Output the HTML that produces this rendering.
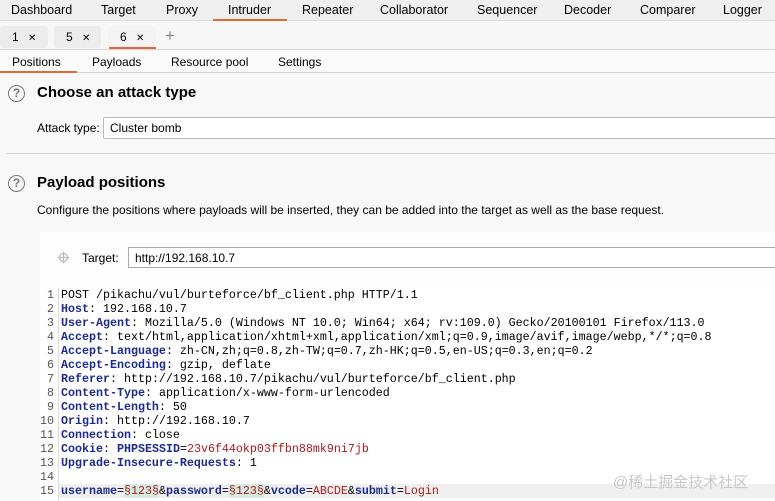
<!DOCTYPE html>
<html><head><meta charset="utf-8"><style>
*{margin:0;padding:0;box-sizing:border-box}
body{width:775px;height:501px;overflow:hidden;background:#f8f8f8;font-family:"Liberation Sans",sans-serif;font-size:12px;color:#000;position:relative}
.a{position:absolute;white-space:nowrap}
.nav{position:absolute;left:0;top:0;width:775px;height:21px;background:#efefef;border-bottom:1px solid #ddd}
.nav span{position:absolute;top:3px;font-size:12.5px}
.tabs{position:absolute;left:0;top:22px;width:775px;height:28px;background:#f7f7f7;border-bottom:1px solid #d4d4d4}
.t{position:absolute;top:4px;height:22px;background:#ececec;border-radius:3px;font-size:12px;padding:4px 0 0 12px}
.sub{position:absolute;left:0;top:51px;width:775px;height:22px;background:#fbfbfb;border-bottom:1px solid #d4d4d4}
.sub span{position:absolute;top:4px;font-size:12px}
.q{position:absolute;width:17px;height:17px;border:1.5px solid #777;border-radius:50%;color:#777;font-size:12px;text-align:center;line-height:14px;font-weight:bold}
.h{font-weight:bold;font-size:15px}
.code{position:absolute;left:40px;top:288px;width:735px;height:213px;background:#fff;font-family:"Liberation Mono",monospace;font-size:11.67px}
.ln{position:absolute;left:0;width:14px;text-align:right;color:#555}
.cl{position:absolute;left:21px;white-space:pre;color:#000}
.k{color:#1c2a8c;font-weight:bold}.r{color:#a51b1b}.m{background:#d6ece2;color:#a51b1b}
</style></head><body>
<div class="nav">
<span style="left:11px">Dashboard</span><span style="left:101px">Target</span><span style="left:166px">Proxy</span>
<span style="left:228px">Intruder</span><span style="left:302px">Repeater</span><span style="left:380px">Collaborator</span>
<span style="left:477px">Sequencer</span><span style="left:564px">Decoder</span><span style="left:640px">Comparer</span><span style="left:723px">Logger</span>
<div style="position:absolute;left:213px;top:19px;width:74px;height:2px;background:#e06b38"></div>
</div>
<div class="tabs">
<div class="t" style="left:0;width:48px">1 <span style="font-size:10px;margin-left:6px">✕</span></div>
<div class="t" style="left:54px;width:47px">5 <span style="font-size:10px;margin-left:6px">✕</span></div>
<div class="t" style="left:108px;width:48px;background:#f3f3f3">6 <span style="font-size:10px;margin-left:6px">✕</span></div>
<div style="position:absolute;left:109px;top:25px;width:47px;height:2px;background:#e06b38"></div>
<span class="a" style="left:165px;top:4px;font-size:17px;color:#888">+</span>
</div>
<div class="sub">
<span style="left:12px">Positions</span><span style="left:92px">Payloads</span><span style="left:171px">Resource pool</span><span style="left:278px">Settings</span>
<div style="position:absolute;left:0;top:20px;width:77px;height:2px;background:#e06b38"></div>
</div>
<div class="q" style="left:8px;top:85px">?</div>
<div class="a h" style="left:37px;top:84px">Choose an attack type</div>
<div class="a" style="left:37px;top:121px">Attack type:</div>
<div style="position:absolute;left:103px;top:117px;width:680px;height:22px;background:#fff;border:1px solid #bbb;border-radius:2px;padding:3px 6px">Cluster bomb</div>
<div style="position:absolute;left:7px;top:153px;width:768px;height:1px;background:#d4d4d4"></div>
<div class="q" style="left:8px;top:175px">?</div>
<div class="a h" style="left:37px;top:174px">Payload positions</div>
<div class="a" style="left:37px;top:203px">Configure the positions where payloads will be inserted, they can be added into the target as well as the base request.</div>
<div style="position:absolute;left:40px;top:232px;width:735px;height:56px;background:#fdfdfd"></div>
<svg class="a" style="left:57px;top:251px" width="13" height="13" viewBox="0 0 13 13"><circle cx="6.5" cy="6.5" r="4" fill="none" stroke="#bbb" stroke-width="1.2"/><path d="M6.5 0.5v12M0.5 6.5h12" stroke="#bbb" stroke-width="1.2"/></svg>
<div class="a" style="left:82px;top:251px">Target:</div>
<div style="position:absolute;left:128px;top:247px;width:660px;height:21px;background:#fff;border:1px solid #aaa;padding:3px 6px">http://192.168.10.7</div>
<div class="code">
<div style="position:absolute;left:18px;top:0;width:1px;height:213px;background:#ddd"></div>
<div style="position:absolute;left:19px;top:196px;width:716px;height:14px;background:#efefef"></div>
<div class="ln" style="top:0">1</div><div class="cl" style="top:0">POST /pikachu/vul/burteforce/bf_client.php HTTP/1.1</div>
<div class="ln" style="top:14px">2</div><div class="cl" style="top:14px"><span class="k">Host</span>: 192.168.10.7</div>
<div class="ln" style="top:28px">3</div><div class="cl" style="top:28px"><span class="k">User-Agent</span>: Mozilla/5.0 (Windows NT 10.0; Win64; x64; rv:109.0) Gecko/20100101 Firefox/113.0</div>
<div class="ln" style="top:42px">4</div><div class="cl" style="top:42px"><span class="k">Accept</span>: text/html,application/xhtml+xml,application/xml;q=0.9,image/avif,image/webp,*/*;q=0.8</div>
<div class="ln" style="top:56px">5</div><div class="cl" style="top:56px"><span class="k">Accept-Language</span>: zh-CN,zh;q=0.8,zh-TW;q=0.7,zh-HK;q=0.5,en-US;q=0.3,en;q=0.2</div>
<div class="ln" style="top:70px">6</div><div class="cl" style="top:70px"><span class="k">Accept-Encoding</span>: gzip, deflate</div>
<div class="ln" style="top:84px">7</div><div class="cl" style="top:84px"><span class="k">Referer</span>: http://192.168.10.7/pikachu/vul/burteforce/bf_client.php</div>
<div class="ln" style="top:98px">8</div><div class="cl" style="top:98px"><span class="k">Content-Type</span>: application/x-www-form-urlencoded</div>
<div class="ln" style="top:112px">9</div><div class="cl" style="top:112px"><span class="k">Content-Length</span>: 50</div>
<div class="ln" style="top:126px">10</div><div class="cl" style="top:126px"><span class="k">Origin</span>: http://192.168.10.7</div>
<div class="ln" style="top:140px">11</div><div class="cl" style="top:140px"><span class="k">Connection</span>: close</div>
<div class="ln" style="top:154px">12</div><div class="cl" style="top:154px"><span class="k">Cookie</span>: <span class="k">PHPSESSID</span>=<span class="r">23v6f44okp03ffbn88mk9ni7jb</span></div>
<div class="ln" style="top:168px">13</div><div class="cl" style="top:168px"><span class="k">Upgrade-Insecure-Requests</span>: 1</div>
<div class="ln" style="top:182px">14</div>
<div class="ln" style="top:196px">15</div><div class="cl" style="top:196px"><span class="k">username</span>=<span class="m">§123§</span>&amp;<span class="k">password</span>=<span class="m">§123§</span>&amp;<span class="k">vcode</span>=<span class="r">ABCDE</span>&amp;<span class="k">submit</span>=<span class="r">Login</span></div>
</div>
<div class="a" style="left:613px;top:471px;font-family:'Liberation Sans','Noto Sans CJK SC',sans-serif;font-size:15px;color:#c8c8c8">@稀土掘金技术社区</div>
</body></html>
